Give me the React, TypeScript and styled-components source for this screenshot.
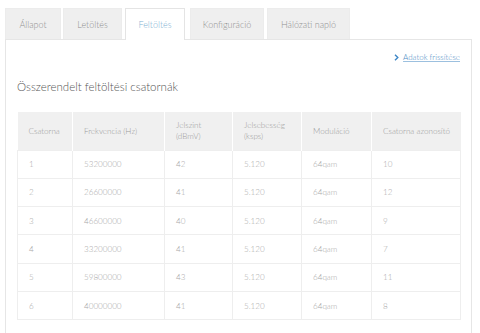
import React from "react";
import styled, { createGlobalStyle } from "styled-components";

const Global = createGlobalStyle`
  html, body { margin: 0; padding: 0; background: #fff; }
  body { font-family: Lato, "Open Sans", "Liberation Sans", sans-serif; font-weight: 300; }
  * { box-sizing: border-box; }
`;

const Page = styled.div`
  padding: 8px 8px 0 5px;
  height: 333px;
  display: flex;
  flex-direction: column;
`;

const TabBar = styled.div`
  display: flex;
  height: 31px;
  position: relative;
  z-index: 1;
`;

const Tab = styled.div<{ $w: number; $gap: number; $active?: boolean }>`
  width: ${(p) => p.$w}px;
  margin-right: ${(p) => p.$gap}px;
  height: ${(p) => (p.$active ? 32 : 31)}px;
  display: flex;
  align-items: center;
  justify-content: center;
  font-size: 9px;
  color: ${(p) => (p.$active ? "#7fb2d3" : "#8f8f8f")};
  background: ${(p) => (p.$active ? "#fff" : "#efefef")};
  border: 1px solid ${(p) => (p.$active ? "#e4e4e4" : "#ececec")};
  border-bottom: none;
`;

const Panel = styled.div`
  flex: 1;
  width: 467px;
  border: 1px solid #e6e6e6;
  border-bottom: none;
  padding: 0 11px 0 11px;
`;

const LinkRow = styled.div`
  display: flex;
  justify-content: flex-end;
  align-items: center;
  gap: 4px;
  padding-top: 11px;
  height: 23px;
`;

const Link = styled.a`
  font-size: 8px;
  color: #4a8bc4;
  text-decoration: underline;
  text-decoration-color: #9cc0df;
`;

const Heading = styled.h2`
  margin: 0;
  padding-top: 17px;
  height: 49px;
  font-size: 11.5px;
  font-weight: 300;
  color: #555;
`;

const Table = styled.table`
  width: 443px;
  border-collapse: collapse;
  font-size: 8.1px;
  table-layout: fixed;
`;

const Th = styled.th<{ $w: number }>`
  width: ${(p) => p.$w}px;
  height: 38px;
  background: #f0f0f0;
  border-right: 1px solid #fff;
  text-align: left;
  font-weight: 300;
  color: #9a9a9a;
  padding: 0 2px 0 11px;
  line-height: 10.5px;
  white-space: nowrap;
  &:last-child { border-right: none; }
`;

const Td = styled.td`
  height: 28.3px;
  padding: 0 11px;
  color: #a8a8a8;
  border: 1px solid #eeeeee;
`;

const tabs = [
  { label: "Állapot", w: 56, gap: 2 },
  { label: "Letöltés", w: 59, gap: 3 },
  { label: "Feltöltés", w: 60, gap: 5, active: true },
  { label: "Konfiguráció", w: 74, gap: 3 },
  { label: "Hálózati napló", w: 83, gap: 0 },
];

const headers = [
  { t: "Csatorna", w: 55 },
  { t: "Frekvencia (Hz)", w: 92 },
  { t: "Jelszint\n(dBmV)", w: 68 },
  { t: "Jelsebesség\n(ksps)", w: 69 },
  { t: "Moduláció", w: 70 },
  { t: "Csatorna azonosító", w: 89 },
];

const rows = [
  ["1", "53200000", "42", "5.120", "64qam", "10"],
  ["2", "26600000", "41", "5.120", "64qam", "12"],
  ["3", "46600000", "40", "5.120", "64qam", "9"],
  ["4", "33200000", "41", "5.120", "64qam", "7"],
  ["5", "59800000", "43", "5.120", "64qam", "11"],
  ["6", "40000000", "41", "5.120", "64qam", "8"],
];

export default function App() {
  return (
    <>
      <Global />
      <Page>
        <TabBar>
          {tabs.map((t) => (
            <Tab key={t.label} $w={t.w} $gap={t.gap} $active={t.active}>
              {t.label}
            </Tab>
          ))}
        </TabBar>
        <Panel>
          <LinkRow>
            <svg width="5" height="7" viewBox="0 0 5 7">
              <path d="M1 0.8 L3.8 3.5 L1 6.2" fill="none" stroke="#3d86c6" strokeWidth="1.4" />
            </svg>
            <Link>Adatok frissítése</Link>
          </LinkRow>
          <Heading>Összerendelt feltöltési csatornák</Heading>
          <Table>
            <thead>
              <tr>
                {headers.map((h) => (
                  <Th key={h.t} $w={h.w}>
                    {h.t.split("\n").map((l, i) => (
                      <React.Fragment key={i}>
                        {i > 0 && <br />}
                        {l}
                      </React.Fragment>
                    ))}
                  </Th>
                ))}
              </tr>
            </thead>
            <tbody>
              {rows.map((r) => (
                <tr key={r[0]}>
                  {r.map((c, i) => (
                    <Td key={i}>{c}</Td>
                  ))}
                </tr>
              ))}
            </tbody>
          </Table>
        </Panel>
      </Page>
    </>
  );
}
